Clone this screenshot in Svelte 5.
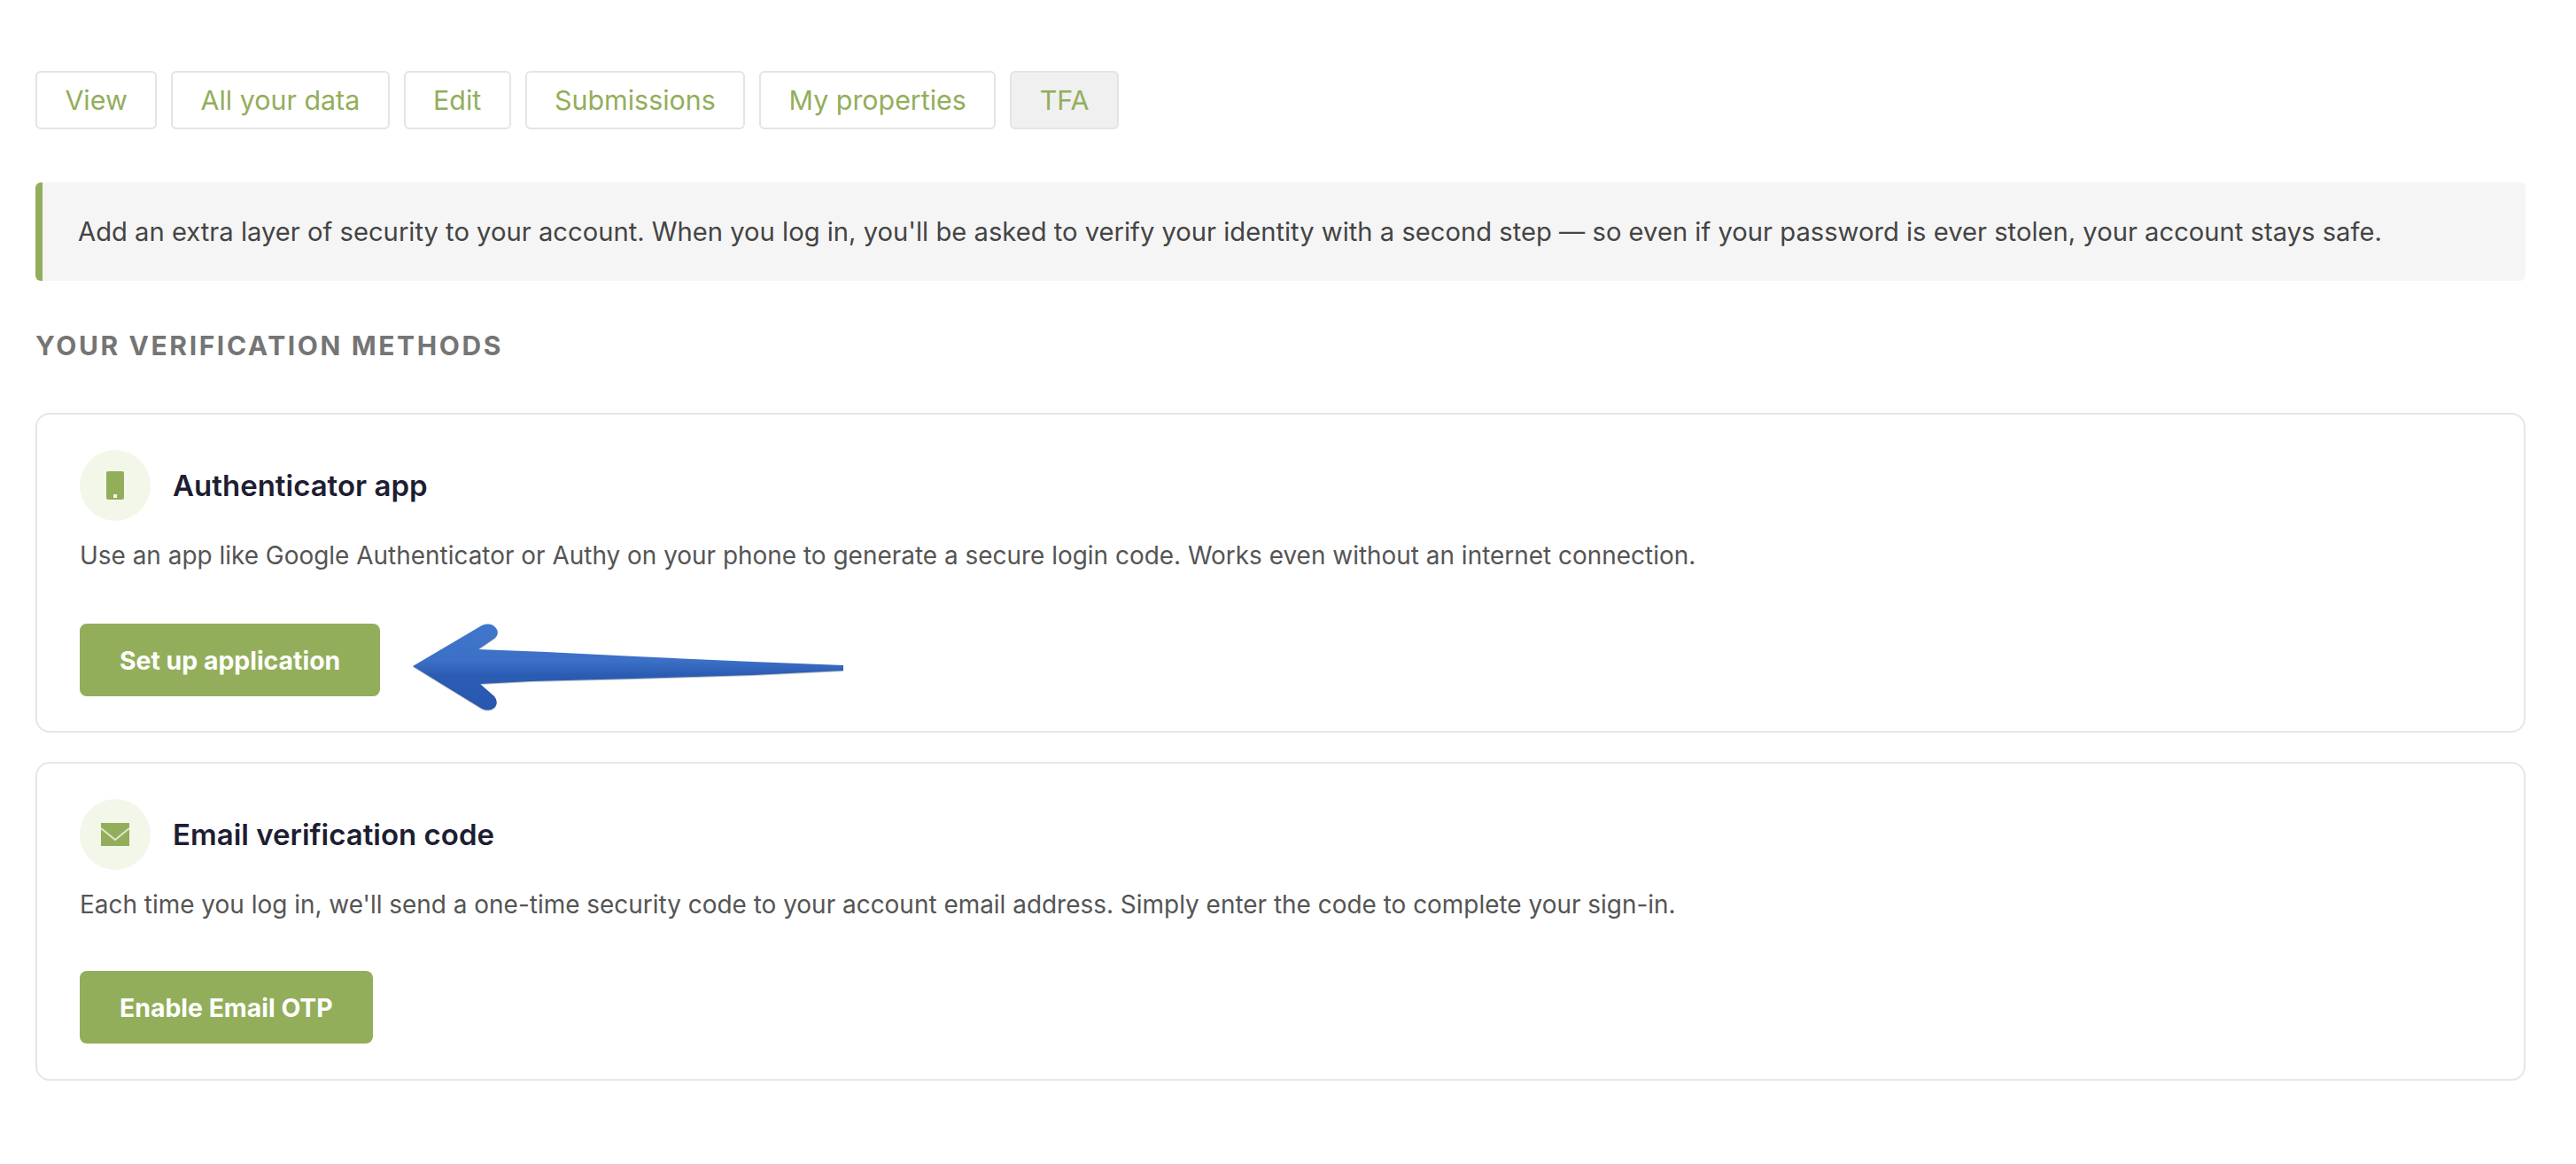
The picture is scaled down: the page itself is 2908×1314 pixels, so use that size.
<script>
  const tabs = ['View', 'All your data', 'Edit', 'Submissions', 'My properties', 'TFA'];
</script>

<main class="page">
  <nav class="tabs">
    {#each tabs as t}
      <a class="tab" class:active={t === 'TFA'} href="#{t}">{t}</a>
    {/each}
  </nav>

  <div class="notice">Add an extra layer of security to your account. When you log in, you'll be asked to verify your identity with a second step — so even if your password is ever stolen, your account stays safe.</div>

  <h2 class="section">YOUR VERIFICATION METHODS</h2>

  <section class="card first">
    <div class="head">
      <span class="badge">
        <svg width="20" height="32" viewBox="0 0 20 32"><path fill="#93ae5b" fill-rule="evenodd" d="M2 0h16a2 2 0 0 1 2 2v28a2 2 0 0 1-2 2H2a2 2 0 0 1-2-2V2a2 2 0 0 1 2-2zM8 26v4h4v-4z"/></svg>
      </span>
      <h3>Authenticator app</h3>
    </div>
    <p>Use an app like Google Authenticator or Authy on your phone to generate a secure login code. Works even without an internet connection.</p>
    <button type="button">Set up application</button>
    <svg class="arrow" width="490" height="100" viewBox="0 0 490 100" aria-hidden="true">
      <defs>
        <linearGradient id="blue" gradientUnits="userSpaceOnUse" x1="0" y1="0" x2="0" y2="100">
          <stop offset="0" stop-color="#4076cb"/>
          <stop offset="0.42" stop-color="#3b70c6"/>
          <stop offset="0.58" stop-color="#2b5cb3"/>
          <stop offset="1" stop-color="#2857ae"/>
        </linearGradient>
      </defs>
      <path fill="url(#blue)" d="M0 48 L78 2 Q88 -2 94 5 Q98 11 93 16 L74 29 L151 32 L251 37 L384 43 L486 47 L486 53 L384 58 L251 62 L134 65 L76 68 L92 82 Q97 88 93 94 Q87 100 78 96 Z"/>
    </svg>
  </section>

  <section class="card second">
    <div class="head">
      <span class="badge">
        <svg width="32" height="26" viewBox="0 0 32 26"><path fill="#93ae5b" d="M0 0h32v26H0z"/><path fill="none" stroke="#dfe8cd" stroke-width="2" d="M0 6l16 13L32 6"/></svg>
      </span>
      <h3>Email verification code</h3>
    </div>
    <p>Each time you log in, we'll send a one-time security code to your account email address. Simply enter the code to complete your sign-in.</p>
    <button type="button">Enable Email OTP</button>
  </section>
</main>

<style>
  :global(body) {
    margin: 0;
    background: #fff;
  }
  .page {
    box-sizing: border-box;
    width: 2908px;
    padding: 80px 57px 0 40px;
    font-family: Inter, "Liberation Sans", sans-serif;
  }
  .tabs {
    display: flex;
    gap: 16px;
  }
  .tab {
    display: flex;
    align-items: center;
    height: 66px;
    box-sizing: border-box;
    padding: 0 31.4px;
    border: 2px solid #e4e4e4;
    border-radius: 6px;
    color: #93ae5b;
    font-size: 30.4px;
    text-decoration: none;
    background: #fff;
  }
  .tab.active {
    background: #f0f0f0;
  }
  .notice {
    margin-top: 60px;
    height: 111px;
    box-sizing: border-box;
    display: flex;
    align-items: center;
    padding-left: 40px;
    background: #f5f5f5;
    border-left: 8px solid #93ae5b;
    border-radius: 6px;
    color: #444;
    font-size: 29.2px;
  }
  .section {
    margin: 56px 0 0;
    height: 34px;
    line-height: 34px;
    color: #757575;
    font-size: 30px;
    font-weight: 700;
    letter-spacing: 2.6px;
  }
  .card {
    position: relative;
    box-sizing: border-box;
    height: 360px;
    padding: 40px 48px;
    border: 2px solid #e6e6e6;
    border-radius: 16px;
    background: #fff;
  }
  .card.first {
    margin-top: 59px;
    height: 361px;
  }
  .card.second {
    margin-top: 33px;
  }
  .head {
    display: flex;
    align-items: center;
    gap: 25px;
  }
  .badge {
    display: flex;
    align-items: center;
    justify-content: center;
    width: 80px;
    height: 80px;
    border-radius: 50%;
    background: #f3f7ea;
  }
  h3 {
    margin: 0;
    color: #1e1e32;
    font-size: 33px;
    font-weight: 600;
  }
  p {
    margin: 22px 0 0;
    height: 34px;
    line-height: 34px;
    color: #555;
    font-size: 27.95px;
  }
  button {
    display: block;
    margin-top: 58px;
    height: 82px;
    padding: 0 45px;
    border: 0;
    border-radius: 8px;
    background: #93ae5b;
    color: #fff;
    font: 700 28.4px Inter, "Liberation Sans", sans-serif;
  }
  .first button {
    margin-top: 60px;
  }
  .arrow {
    position: absolute;
    left: 424px;
    top: 236px;
    overflow: visible;
    filter: drop-shadow(0 1px 0.5px rgba(0, 0, 0, 0.25));
  }
</style>
